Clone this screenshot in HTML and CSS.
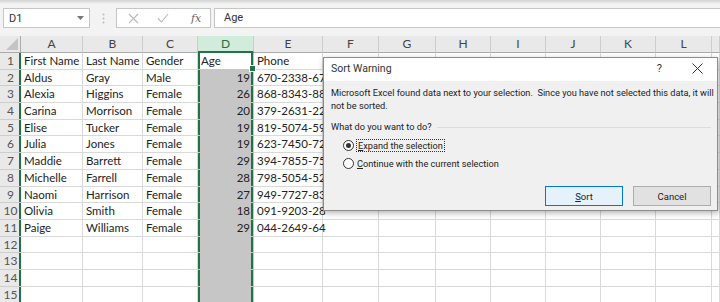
FILE: index.html
```html
<!DOCTYPE html>
<html lang="en">
<head>
  <meta charset="UTF-8" />
  <title>Sort Warning</title>
  <link rel="stylesheet" href="styles.css">
</head>
<body>
  <div class="app">
    <!-- Formula bar -->
    <div class="topbar">
      <div class="name-box">
        <span>D1</span>
        <svg class="caret" width="7" height="4" viewBox="0 0 7 4"><path d="M0 0h7L3.5 4z" fill="#777"/></svg>
      </div>
      <div class="grip">
        <svg width="3" height="11" viewBox="0 0 3 11"><circle cx="1.5" cy="1.5" r="1" fill="#bbb"/><circle cx="1.5" cy="5.5" r="1" fill="#bbb"/><circle cx="1.5" cy="9.5" r="1" fill="#bbb"/></svg>
      </div>
      <div class="fx-tools">
        <svg width="11" height="11" viewBox="0 0 11 11"><path d="M1 1l9 9M10 1l-9 9" stroke="#b9b9b9" stroke-width="1.1"/></svg>
        <svg width="12" height="10" viewBox="0 0 12 10"><path d="M1 5.5l3.5 3.5L11 1" stroke="#b9b9b9" stroke-width="1.1" fill="none"/></svg>
        <span class="fx">fx</span>
      </div>
      <div class="formula-input">Age</div>
    </div>

    <!-- Sheet -->
    <div class="sheet" id="sheet"></div>

    <!-- Sort Warning dialog -->
    <div class="dialog">
      <div class="dialog-title">
        <span>Sort Warning</span>
        <div class="title-buttons">
          <span class="help">?</span>
          <svg width="11" height="11" viewBox="0 0 11 11"><path d="M0.5 0.5l10 10M10.5 0.5l-10 10" stroke="#333" stroke-width="1"/></svg>
        </div>
      </div>
      <div class="dialog-body">
        <p class="message">Microsoft Excel found data next to your selection.&nbsp; Since you have not selected this data, it will<br>not be sorted.</p>
        <div class="group-label"><span>What do you want to do?</span></div>
        <div class="options">
          <label class="option"><span class="radio checked"></span><span class="focus"><u>E</u>xpand the selection</span></label>
          <label class="option"><span class="radio"></span><span><u>C</u>ontinue with the current selection</span></label>
        </div>
        <div class="actions">
          <button class="btn default"><u>S</u>ort</button>
          <button class="btn">Cancel</button>
        </div>
      </div>
    </div>
  </div>

  <script>
    const cols = ["A","B","C","D","E","F","G","H","I","J","K","L",""];
    const rows = [
      ["First Name","Last Name","Gender","Age","Phone"],
      ["Aldus","Gray","Male",19,"670-2338-67"],
      ["Alexia","Higgins","Female",26,"868-8343-88"],
      ["Carina","Morrison","Female",20,"379-2631-22"],
      ["Elise","Tucker","Female",19,"819-5074-59"],
      ["Julia","Jones","Female",19,"623-7450-72"],
      ["Maddie","Barrett","Female",29,"394-7855-75"],
      ["Michelle","Farrell","Female",28,"798-5054-52"],
      ["Naomi","Harrison","Female",27,"949-7727-83"],
      ["Olivia","Smith","Female",18,"091-9203-28"],
      ["Paige","Williams","Female",29,"044-2649-64"]
    ];
    const sheet = document.getElementById("sheet");

    function cell(cls, text) {
      const d = document.createElement("div");
      d.className = cls;
      if (text !== undefined && text !== "") d.textContent = text;
      sheet.appendChild(d);
    }

    cell("corner");
    cols.forEach((c, i) => cell("col-head" + (i === 3 ? " active" : ""), c));

    for (let r = 0; r < 15; r++) {
      cell("row-head", r + 1);
      const data = rows[r] || [];
      cols.forEach((c, i) => {
        let cls = "cell";
        const v = data[i];
        if (typeof v === "number") cls += " num";
        if (i === 3) cls += r === 0 ? " sel active-cell" : " sel";
        cell(cls, v);
      });
    }
  </script>
</body>
</html>
```

FILE: styles.css
```css
body {
  margin: 0;
  background: #fff;
  overflow: hidden;
}
.app {
  position: relative;
  width: 720px;
  height: 302px;
  overflow: hidden;
  font-family: "Roboto", sans-serif;
}

/* formula bar */
.topbar {
  height: 36px;
  box-sizing: border-box;
  padding-top: 8px;
  background: linear-gradient(#d2d2d2, #f3f3f3 4px);
  display: flex;
  align-items: flex-start;
}
.name-box {
  margin-left: 3px;
  width: 87px;
  height: 20px;
  box-sizing: border-box;
  background: #fff;
  border: 1px solid #c6c6c6;
  display: flex;
  align-items: center;
  justify-content: space-between;
  padding: 0 5px 0 5px;
  font-size: 11px;
  color: #333;
}
.grip {
  width: 26px;
  height: 20px;
  display: flex;
  align-items: center;
  justify-content: center;
}
.fx-tools {
  width: 95px;
  height: 20px;
  box-sizing: border-box;
  background: #fff;
  border: 1px solid #c6c6c6;
  display: flex;
  align-items: center;
  gap: 18px;
  padding-left: 11px;
}
.fx {
  font-family: "DejaVu Serif", serif;
  font-style: italic;
  font-size: 11px;
  color: #666;
  margin-left: 4px;
}
.formula-input {
  margin-left: 3px;
  flex: 1;
  height: 20px;
  box-sizing: border-box;
  background: #fff;
  border: 1px solid #c6c6c6;
  border-right: none;
  padding-left: 9px;
  font-size: 11px;
  line-height: 18px;
  color: #333;
}

/* grid */
.sheet {
  display: grid;
  grid-template-columns: 21px 62px 60px 55px 56px 69px 56px 57px 55px 55px 55px 55px 56px 1fr;
  grid-template-rows: 17px repeat(15, 16.7px);
  font-family: "Lato", sans-serif;
  font-size: 11px;
  color: #222;
}
.corner {
  background: #e9e9e9;
  border-right: 1px solid #ababab;
  border-bottom: 1px solid #ababab;
  position: relative;
}
.corner::after {
  content: "";
  position: absolute;
  right: 2px;
  bottom: 2px;
  border-left: 12px solid transparent;
  border-bottom: 12px solid #c4c4c4;
}
.col-head {
  background: #e9e9e9;
  border-right: 1px solid #cdcdcd;
  border-bottom: 1px solid #ababab;
  text-align: center;
  font-size: 12px;
  line-height: 16px;
  color: #444;
}
.col-head.active {
  background: #d2ecdc;
  color: #217346;
  border-bottom: 2px solid #217346;
}
.row-head {
  background: #e9e9e9;
  border-bottom: 1px solid #cdcdcd;
  box-shadow: inset -2px 0 #217346;
  text-align: center;
  color: #555;
  font-size: 12px;
  line-height: 16px;
}
.cell {
  box-sizing: border-box;
  border-right: 1px solid #d9d9d9;
  border-bottom: 1px solid #d9d9d9;
  padding: 0 2px 0 3px;
  line-height: 16px;
  font-size: 11.5px;
  white-space: nowrap;
  overflow: visible;
}
.num {
  text-align: right;
}
.sel {
  background: #c6c6c6;
  border-color: #c6c6c6;
  box-shadow: inset 2px 0 #217346, inset -2px 0 #217346;
  padding-right: 3px;
}
.active-cell {
  background: #fff;
  position: relative;
}
.active-cell::after {
  content: "";
  position: absolute;
  right: -3px;
  bottom: -3px;
  width: 5px;
  height: 5px;
  background: #217346;
  border: 1px solid #fff;
  z-index: 2;
}

/* dialog */
.dialog {
  position: absolute;
  left: 323px;
  top: 57px;
  width: 395px;
  height: 154px;
  box-sizing: border-box;
  border: 1px solid #8c8c8c;
  background: #f0f0f0;
  box-shadow: 1px 2px 6px rgba(0, 0, 0, 0.3);
  display: flex;
  flex-direction: column;
  font-size: 9.2px;
  color: #222;
}
.dialog-title {
  height: 23px;
  box-sizing: border-box;
  padding-bottom: 3px;
  background: #fff;
  display: flex;
  align-items: center;
  justify-content: space-between;
  padding-left: 7px;
  font-size: 10.5px;
  color: #333;
}
.title-buttons {
  display: flex;
  align-items: center;
  gap: 30px;
  padding-right: 14px;
}
.help {
  font-size: 11px;
}
.dialog-body {
  padding: 6px 6px 0 7px;
  flex: 1;
  display: flex;
  flex-direction: column;
}
.message {
  margin: 0;
  line-height: 12.5px;
  white-space: nowrap;
}
.group-label {
  margin-top: 9px;
  display: flex;
  align-items: center;
  gap: 5px;
  line-height: 12px;
}
.group-label::after {
  content: "";
  flex: 1;
  border-top: 1px solid #dcdcdc;
}
.options {
  margin-top: 6px;
  padding-left: 12px;
  display: flex;
  flex-direction: column;
  gap: 5px;
}
.option {
  display: flex;
  align-items: center;
  gap: 3px;
  height: 13px;
}
.radio {
  width: 11px;
  height: 11px;
  box-sizing: border-box;
  border: 1px solid #333;
  border-radius: 50%;
  background: #fff;
  display: flex;
  align-items: center;
  justify-content: center;
}
.radio.checked::after {
  content: "";
  width: 5px;
  height: 5px;
  border-radius: 50%;
  background: #333;
}
.focus {
  outline: 1px dotted #333;
  padding: 0 1px;
}
.actions {
  margin-top: 16px;
  display: flex;
  justify-content: flex-end;
  gap: 10px;
}
.btn {
  width: 78px;
  height: 20px;
  box-sizing: border-box;
  border: 1px solid #adadad;
  background: #e1e1e1;
  font-family: "Roboto", sans-serif;
  font-size: 9.5px;
  color: #222;
  padding: 0;
}
.btn.default {
  border-color: #0078d7;
  background: #e5f1fb;
}
```
